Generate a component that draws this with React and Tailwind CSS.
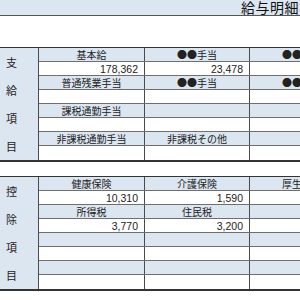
import React from "react";

const jp = { fontFamily: '"Noto Sans CJK JP", "Noto Sans", sans-serif' };

// payment rows: [header, value] pairs per column
const payRows = [
  { heads: ["基本給", "●●手当", "●●手当"], vals: ["178,362", "23,478", ""] },
  { heads: ["普通残業手当", "●●手当", "●●手当"], vals: ["", "", ""] },
  { heads: ["課税通勤手当", "", ""], vals: ["", "", ""] },
  { heads: ["非課税通勤手当", "非課税その他", ""], vals: ["", "", ""] },
];

const dedRows = [
  { heads: ["健康保険", "介護保険", "厚生年金"], vals: ["10,310", "1,590", ""] },
  { heads: ["所得税", "住民税", ""], vals: ["3,770", "3,200", ""] },
  { heads: ["", "", ""], vals: ["", "", ""] },
  { heads: ["", "", ""], vals: ["", "", ""] },
];

const colW = ["w-[106px]", "w-[105px]", "w-[105px]"];

function Row({ cells, head, last }) {
  return (
    <div
      className={`flex h-[14px] shrink-0 ${last ? "" : "border-b border-[#6f6f6f]"} ${
        head ? "bg-[#dce6f1]" : "bg-white"
      }`}
    >
      {cells.map((c, i) => (
        <div
          key={i}
          className={`${colW[i]} shrink-0 border-r border-[#4a4a4a] overflow-hidden whitespace-nowrap ${
            head
              ? "text-center text-[10px] leading-[14px] text-[#222]"
              : "text-right pr-[6px] text-[10.5px] leading-[15px] text-[#222]"
          }`}
          style={head ? undefined : { fontFamily: '"Liberation Sans", Arial, sans-serif' }}
        >
          {c}
        </div>
      ))}
    </div>
  );
}

function Section({ label, rows }) {
  return (
    <div className="flex border-t border-b-2 border-[#333]">
      <div className="w-[39px] shrink-0 bg-[#dce6f1] border-r border-[#4a4a4a] flex flex-col">
        {label.map((ch) => (
          <div key={ch} className="h-[28px] flex items-center pl-[6px] text-[11px] text-[#222]">
            {ch}
          </div>
        ))}
      </div>
      <div className="flex flex-col">
        {rows.map((r, i) => (
          <React.Fragment key={i}>
            <Row cells={r.heads} head />
            <Row cells={r.vals} last={i === rows.length - 1} />
          </React.Fragment>
        ))}
      </div>
    </div>
  );
}

export default function App() {
  return (
    <div className="w-[300px] h-[300px] overflow-hidden bg-white" style={jp}>
      {/* title band */}
      <div className="h-[16px] bg-[#dce6f1] border-b border-[#555] pl-[241px] whitespace-nowrap text-[14px] leading-[15px] tracking-[0.5px] text-[#111]">
        給与明細書
      </div>
      <div className="h-[31px]" />
      <Section label={["支", "給", "項", "目"]} rows={payRows} />
      <div className="h-[14px]" />
      <Section label={["控", "除", "項", "目"]} rows={dedRows} />
    </div>
  );
}
